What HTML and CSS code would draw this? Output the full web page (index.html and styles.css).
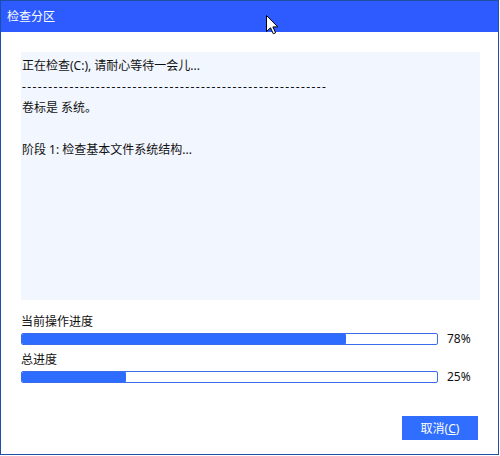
FILE: index.html
```html
<!DOCTYPE html>
<html lang="zh-CN">
<head>
<meta charset="utf-8">
<title>检查分区</title>
<link rel="stylesheet" href="styles.css">
</head>
<body>
<div class="window">
  <div class="titlebar">检查分区</div>
  <div class="content">
    <div class="log">
      <div class="line">正在检查(C:), 请耐心等待一会儿...</div>
      <div class="line dashes">----------------------------------------------------------</div>
      <div class="line">卷标是 系统。</div>
      <div class="line">&nbsp;</div>
      <div class="line">阶段 1: 检查基本文件系统结构...</div>
    </div>
    <div class="progress-group">
      <div class="label">当前操作进度</div>
      <div class="progress-row">
        <div class="bar"><div class="fill" style="width:78%"></div></div>
        <div class="pct">78%</div>
      </div>
      <div class="label second">总进度</div>
      <div class="progress-row">
        <div class="bar"><div class="fill" style="width:25%"></div></div>
        <div class="pct">25%</div>
      </div>
    </div>
    <div class="actions">
      <button class="btn">取消(<u>C</u>)</button>
    </div>
  </div>
</div>
<svg class="cursor" width="14" height="20" viewBox="0 0 14 20">
  <path d="M0.5 0.5 L0.5 16.5 L4.5 12.8 L7.3 18.8 L9.6 17.8 L6.9 11.9 L11.8 11.9 Z" fill="#fff" stroke="#000" stroke-width="1" stroke-linejoin="miter"/>
</svg>
</body>
</html>
```
FILE: styles.css
```css
html, body {
  margin: 0;
  padding: 0;
  background: #ffffff;
}
body {
  width: 500px;
  height: 456px;
  position: relative;
  font-family: "Noto Sans", "Noto Sans CJK SC", sans-serif;
  font-size: 12px;
  color: #111;
}
.window {
  box-sizing: border-box;
  width: 499px;
  height: 455px;
  border: 1px solid #1e4fa6;
  background: #fff;
  display: flex;
  flex-direction: column;
}
.titlebar {
  height: 31px;
  background: #2e5bff;
  color: #fff;
  line-height: 31px;
  padding-left: 6px;
  font-size: 12px;
}
.content {
  padding: 20px 0 0 20px;
  display: flex;
  flex-direction: column;
}
.log {
  box-sizing: border-box;
  width: 459px;
  height: 248px;
  background: #f2f6fe;
  padding: 3px 0 0 1px;
}
.line {
  line-height: 21px;
  height: 21px;
  white-space: nowrap;
}
.dashes {
  letter-spacing: 1.4px;
}
.progress-group {
  margin-top: 13px;
  display: flex;
  flex-direction: column;
}
.label {
  height: 18px;
  line-height: 18px;
}
.label.second {
  margin-top: 6px;
}
.progress-row {
  margin-top: 2px;
  display: flex;
  align-items: center;
  height: 12px;
}
.bar {
  box-sizing: border-box;
  width: 417px;
  height: 12px;
  border: 1px solid #3a6cec;
  border-radius: 2px;
  background: #fff;
  overflow: hidden;
}
.fill {
  height: 100%;
  background: #2e6cff;
  border-radius: 1px;
}
.pct {
  margin-left: 9px;
  line-height: 14px;
}
.actions {
  margin-top: 33px;
  display: flex;
  justify-content: flex-end;
  padding-right: 20px;
}
.btn {
  width: 76px;
  height: 24px;
  border: none;
  background: #2f6eff;
  color: #fff;
  font-family: "Noto Sans", "Noto Sans CJK SC", sans-serif;
  font-size: 12px;
  padding: 0;
  cursor: default;
}
.btn u {
  text-underline-offset: 1px;
}
.cursor {
  position: absolute;
  left: 266px;
  top: 15px;
}
```
